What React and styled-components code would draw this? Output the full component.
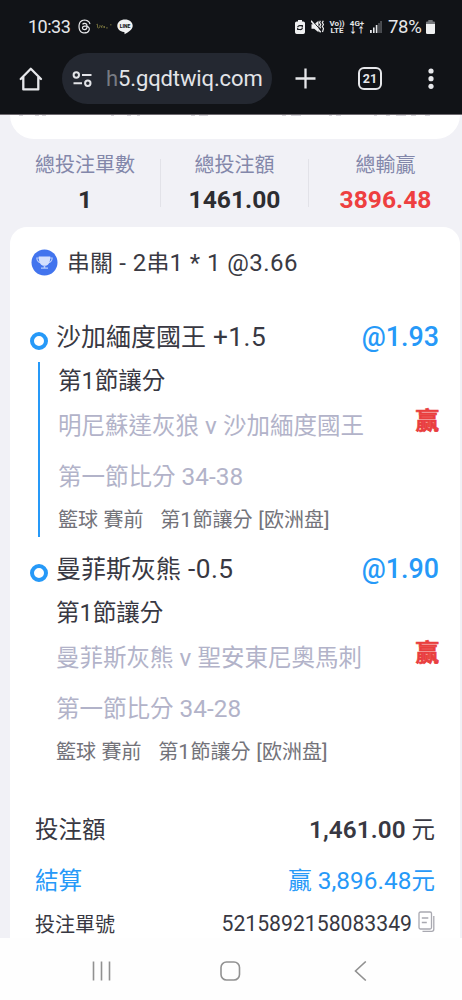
import React from 'react'
import styled, { createGlobalStyle } from 'styled-components'
import { FaThreads } from 'react-icons/fa6'

const GlobalStyle = createGlobalStyle`
    *, *::before, *::after {
        box-sizing: border-box;
    }

    body {
        margin: 0;
        font-family: Roboto, 'Noto Sans CJK TC', sans-serif;
        background: #fefefe;
    }

    svg {
        display: block;
        flex: none;
    }
`

const Phone = styled.div`
    width: 462px;
    height: 1000px;

    display: flex;
    flex-direction: column;
    overflow: hidden;
`

const StatusBar = styled.div`
    height: 53px;
    padding: 0 27px 0 28px;

    display: flex;
    align-items: center;
    justify-content: space-between;

    color: #e6e7ea;
    background: #111317;
`

const StatusGroup = styled.div`
    display: flex;
    align-items: center;
    gap: ${props => props.$gap}px;
`

const Clock = styled.span`
    width: 44px;
    font-size: 18px;
    letter-spacing: -0.5px;
    white-space: nowrap;
`

const Percent = styled.span`
    width: 38px;
    font-size: 18.5px;
    letter-spacing: -0.3px;
`

const TinyLabel = styled.span`
    width: 14px;
    font-size: 8px;
    line-height: 7px;
    font-weight: 700;
    white-space: nowrap;

    display: flex;
    flex-direction: column;
    align-items: center;
`

const BrowserBar = styled.div`
    height: 62px;
    padding: 0 24px 10px 19px;

    display: flex;
    align-items: center;

    background: #111317;
    border-bottom: 1px solid #6e6a70;
`

const AddressBox = styled.div`
    width: 210px;
    height: 51px;
    margin-left: 19px;
    padding-left: 10px;

    display: flex;
    align-items: center;

    border-radius: 26px;
    background: #242831;
`

const Address = styled.span`
    margin-left: 13px;
    font-size: 22px;
    letter-spacing: -0.12px;
    white-space: nowrap;
    color: #e3e4e8;

    .faded {
        color: #777b83;
    }
`

const BrowserActions = styled.div`
    flex: 1;
    margin-left: 23px;

    display: flex;
    align-items: center;
    justify-content: space-between;
`

const TabCount = styled.div`
    width: 24px;
    height: 23px;
    margin-left: 17px;
    margin-right: 17px;

    display: flex;
    align-items: center;
    justify-content: center;

    font-size: 12.5px;
    font-weight: 700;
    color: #e6e7ea;
    border: 2px solid #e6e7ea;
    border-radius: 6px;
`

const Page = styled.main`
    height: 823px;
    padding: 0 2px 0 10px;
    overflow: hidden;
    background: #f1f1f6;
`

const FilterCard = styled.div`
    height: 24px;
    background: #fff;
    border-radius: 0 0 28px 28px;
    overflow: hidden;
`

const Totals = styled.section`
    height: 88px;
    padding-top: 11px;
    display: flex;
`

const Total = styled.div`
    width: ${props => props.$width}px;
    flex: none;

    display: flex;
    flex-direction: column;
    align-items: center;

    span {
        height: 30px;
        line-height: 30px;
        font-size: 20px;
        color: #8387aa;
    }

    strong {
        height: 38px;
        line-height: 39px;
        font-size: 24.6px;
        color: ${props => props.$loss ? '#ee3f40' : '#2d2d31'};
    }
`

const Divider = styled.i`
    width: 1px;
    height: 48px;
    margin-top: 9px;
    flex: none;
    background: #e2e2e8;
`

const BetCard = styled.section`
    height: 740px;
    padding: 0 21px 0 20px;
    background: #fff;
    border-radius: 17px;
`

const CardTitle = styled.h1`
    height: 71px;
    margin: 0 0 16px 1px;

    display: flex;
    align-items: center;
    gap: 9px;

    font-size: 22.9px;
    font-weight: 400;
    white-space: pre;
    color: #3a3a43;

    > span {
        margin-top: -3px;
    }
`

const LegBox = styled.article`
    display: flex;
    margin-bottom: ${props => props.$last ? 36 : 10}px;
`

const Rail = styled.div`
    width: 18px;
    padding-top: 18px;

    display: flex;
    flex-direction: column;
    align-items: center;

    &::before {
        content: '';
        width: 18px;
        height: 18px;
        flex: none;
        border: 4px solid #2699f8;
        border-radius: 50%;
    }

    &::after {
        content: '';
        width: 2px;
        height: 175px;
        margin-top: 12px;
        margin-bottom: -1px;
        background: ${props => props.$line ? '#2699f8' : 'transparent'};
    }
`

const LegBody = styled.div`
    flex: 1;
    padding-left: ${props => props.$indent}px;
`

const Line = styled.div`
    height: ${props => props.$height}px;
    padding-bottom: 2px;

    display: flex;
    align-items: center;
    justify-content: space-between;

    font-size: ${props => props.$size || 23.5}px;
    color: ${props => props.$color || '#383842'};
    white-space: pre;
`

const Selection = styled(Line)`
    margin-left: ${props => -props.$shift}px;
    padding-bottom: 4px;
    font-size: 25px;
`

// latin runs sit a touch larger than the han characters
const Latin = styled.span`
    font-size: ${props => props.$tight ? 1.035 : 1.05}em;
    letter-spacing: ${props => props.$tight ? 0.003 : 0.018}em;
`

const Odds = styled.span`
    margin-top: 3px;
    font-size: 26.8px;
    font-weight: 500;
    color: #2699f8;
`

const Win = styled.b`
    margin-top: -11px;
    font-family: 'Noto Sans CJK SC', sans-serif;
    font-size: 23.5px;
    color: #e93e3e;
    -webkit-text-stroke: 0.7px #e93e3e;
`

const Summary = styled.div`
    padding: 0 4px 0 5px;
`

const BoldAmount = styled.b`
    font-size: 24.3px;
    font-weight: 600;
    letter-spacing: 0.1px;
`

const TicketId = styled.span`
    display: flex;
    align-items: center;
    gap: 6px;
    font-size: 21.2px;

    svg {
        margin-top: -3px;
    }
`

const NavBar = styled.nav`
    height: 62px;
    padding: 3px 95px 0 91px;

    display: flex;
    align-items: center;
    justify-content: space-between;

    background: #fefefe;

    .home {
        margin-right: 5px;
    }
`

const legs = [
    {
        name: '沙加緬度國王 +1.5',
        odds: '@1.93',
        market: '第1節讓分',
        teams: '明尼蘇達灰狼 v 沙加緬度國王',
        score: '第一節比分 34-38',
    },
    {
        name: '曼菲斯灰熊 -0.5',
        odds: '@1.90',
        market: '第1節讓分',
        teams: '曼菲斯灰熊 v 聖安東尼奧馬刺',
        score: '第一節比分 34-28',
    },
]

const Mixed = ({ children, tight }) => (
    <span>
        {children.split(/([ -~]+)/).map((part, i) => i % 2 ? <Latin key={i} $tight={tight}>{part}</Latin> : part)}
    </span>
)

const LineBubble = () => (
    <svg width="16" height="16" viewBox="0 0 16 16">
        <path d="M8 0.5C3.6 .5 .3 3.2 .3 6.8c0 3.2 2.7 5.8 6.6 6.3.7.1.8.6.6 2.2 3.5-1.8 8.2-4.6 8.2-8.5C15.700 3.200 12.400.5 8 .5z" fill="#f1f2f3" />
        <text x="8" y="8.700" textAnchor="middle" fontSize="5" fontWeight="900" fill="#15171b">LINE</text>
    </svg>
)

const Scribble = () => (
    <svg width="16" height="8" viewBox="0 0 16 8" fill="none" stroke="#77733d" strokeWidth="0.9">
        <path d="M.5 1.500 1.500 1.200v3.300q1 1.200 2.500-.5V2M5.500 4.800V3q1.200-1 1.700.3v1.500M8.500 5V3M10 4.900h1.800M14 1.800h1.500" />
    </svg>
)

const BatterySaver = () => (
    <svg width="10" height="14" viewBox="0 0 10 14">
        <path d="M3 0h4v1.500h1.300Q10 1.500 10 3v9.300Q10 14 8.300 14H1.700Q0 14 0 12.300V3Q0 1.500 1.700 1.500H3z" fill="#eff0f1" />
        <path d="M2.500 7.300Q3.500 5.500 5 5.700h2.300V7.500M7.500 8Q6.700 9.800 5 9.500H2.700V8" fill="none" stroke="#17191d" strokeWidth="1.200" />
    </svg>
)

const MutedVibrate = () => (
    <svg width="13" height="13" viewBox="0 0 13 13">
        <path d="M.5 4.300h2.700L7.500.8v11.400L3.200 8.800H.5z" fill="#eff0f1" />
        <path d="m1.500.8 9.500 11" stroke="#111317" strokeWidth="1" />
        <path d="m0 .8 9.700 11.500" stroke="#eff0f1" strokeWidth="1.400" />
        <path d="m9.400.8-.9 2 1.200 1.700-1 2 1 1.700M12.300.8l-1 2 1.200 1.700-1.200 2 1.200 2-1 3.500" fill="none" stroke="#eff0f1" strokeWidth="1.200" />
    </svg>
)

const Signal = () => (
    <svg width="12" height="13" viewBox="0 0 12 13" fill="#e6e7ea">
        <path d="M0 10h1.800v3H0zM3 7.500h1.600V13H3zM5.800 5h1.600v8H5.800z" />
        <path d="M8.300 3h1.400v10H8.300zM10.300 1h1.500v12h-1.500z" fill="#5b5e63" />
    </svg>
)

const Battery = () => (
    <svg width="9" height="14" viewBox="0 0 9 14">
        <path d="M2.300 0h4.400v1.500H8q1 0 1 1V5H0V2.500q0-1 1-1h1.300z" fill="#75777b" />
        <path d="M0 4h9v8.700Q9 14 7.700 14H1.300Q0 14 0 12.700z" fill="#eff0f1" />
    </svg>
)

const Home = () => (
    <svg width="24" height="24" viewBox="0 0 24 24" fill="none" stroke="#e6e7ea" strokeWidth="2.300" strokeLinejoin="round" strokeLinecap="round">
        <path d="M1.700 12 11.800 1.800 22 12M4.300 10v12.400h15V10" />
    </svg>
)

const SiteSettings = () => (
    <svg width="21" height="16" viewBox="0 0 21 16" fill="none" stroke="#e3e4e8" strokeWidth="2">
        <circle cx="4.300" cy="4" r="2.700" />
        <path d="M10 4h9.500M1.500 12.300h8.500" />
        <circle cx="15.800" cy="12.300" r="2.700" />
    </svg>
)

const Trophy = () => (
    <svg width="27" height="27" viewBox="0 0 27 27">
        <circle cx="13.500" cy="13.500" r="13" fill="#4274ee" />
        <path d="M8 9H5.800q.2 4 4 4.800M19 9h2.200q-.2 4-4 4.800" fill="none" stroke="#b7cbfc" strokeWidth="1.100" />
        <path d="M7.700 7.500h11.600q0 8-4.300 9.300h-3Q7.700 15.500 7.700 7.500z" fill="#d3dffd" />
        <path d="M12.700 16.500h1.600V18.500h2.700v1.300H10v-1.300h2.700z" fill="#b7cbfc" />
    </svg>
)

const CopyIcon = () => (
    <svg width="17" height="22" viewBox="0 0 17 22" fill="none" stroke="#a9a9b1" strokeWidth="1.300">
        <rect x="1" y="1" width="12.500" height="17" rx="1.500" />
        <path d="M3.800 7h6.500M3.800 11.500h5M4.500 20.300h9.300q2 0 2-2V5" />
    </svg>
)

// parts of the filter labels left visible under the browser bar
const FilterEdge = () => (
    <svg width="450" height="1" viewBox="0 0 450 1" stroke="#d6d5da" strokeWidth="1">
        <path d="M9 .5h4M25 .5h4M32 .5h4M101 .5h3M117 .5h4M127 .5h3M181 .5h4M189 .5h9M272 .5h4M281 .5h10M319 .5h3M326 .5h5M364 .5h3M376 .5h4M386 .5h10M401 .5h5M415 .5h5" />
    </svg>
)

const Leg = ({ leg, indent, last }) => (
    <LegBox $last={last}>
        <Rail $line={!last} />
        <LegBody $indent={indent}>
            <Selection $height={46} $shift={indent - 8}>
                <Mixed>{leg.name}</Mixed>
                <Odds>{leg.odds}</Odds>
            </Selection>
            <Line $height={40}>{leg.market}</Line>
            <Line $height={50} $color="#b2b3c9">
                <Mixed tight>{leg.teams}</Mixed>
                <Win>赢</Win>
            </Line>
            <Line $height={52} $color="#b2b3c9"><Mixed tight>{leg.score}</Mixed></Line>
            <Line $height={34} $size={20} $color="#73737a"><Mixed>{'籃球 賽前   第1節讓分 [欧洲盘]'}</Mixed></Line>
        </LegBody>
    </LegBox>
)

const App = () => {
    return (
        <Phone>
            <GlobalStyle />
            <StatusBar>
                <StatusGroup $gap={4.7}>
                    <Clock>10:33</Clock>
                    <FaThreads size={15} />
                    <Scribble />
                    <LineBubble />
                </StatusGroup>
                <StatusGroup $gap={6}>
                    <BatterySaver />
                    <MutedVibrate />
                    <TinyLabel><span>Vo))</span><span>LTE</span></TinyLabel>
                    <TinyLabel><span>4G+</span><span>↓↑</span></TinyLabel>
                    <Signal />
                    <StatusGroup $gap={0}>
                        <Percent>78%</Percent>
                        <Battery />
                    </StatusGroup>
                </StatusGroup>
            </StatusBar>

            <BrowserBar>
                <Home />
                <AddressBox>
                    <SiteSettings />
                    <Address><span className="faded">h</span>5.gqdtwiq.com</Address>
                </AddressBox>
                <BrowserActions>
                    <svg width="21" height="21" viewBox="0 0 21 21" stroke="#e6e7ea" strokeWidth="2.300">
                        <path d="M10.500 .5v20M.5 10.500h20" />
                    </svg>
                    <TabCount>21</TabCount>
                    <svg width="14" height="22" viewBox="0 0 14 22" fill="#e6e7ea">
                        <circle cx="7" cy="3" r="2.600" />
                        <circle cx="7" cy="10.700" r="2.600" />
                        <circle cx="7" cy="18.300" r="2.600" />
                    </svg>
                </BrowserActions>
            </BrowserBar>

            <Page>
                <FilterCard><FilterEdge /></FilterCard>

                <Totals>
                    <Total $width={150}><span>總投注單數</span><strong>1</strong></Total>
                    <Divider />
                    <Total $width={147}><span>總投注額</span><strong>1461.00</strong></Total>
                    <Divider />
                    <Total $width={153} $loss><span>總輸贏</span><strong>3896.48</strong></Total>
                </Totals>

                <BetCard>
                    <CardTitle><Trophy /><Mixed>串關 - 2串1 * 1 @3.66</Mixed></CardTitle>
                    <Leg leg={legs[0]} indent={10} />
                    <Leg leg={legs[1]} indent={8} last />
                    <Summary>
                        <Line $height={50}>
                            投注額
                            <span><BoldAmount>1,461.00</BoldAmount> 元</span>
                        </Line>
                        <Line $height={51} $color="#2699f8">
                            結算
                            <Mixed tight>贏 3,896.48元</Mixed>
                        </Line>
                        <Line $height={38} $size={20}>
                            投注單號
                            <TicketId>5215892158083349<CopyIcon /></TicketId>
                        </Line>
                    </Summary>
                </BetCard>
            </Page>

            <NavBar>
                <svg width="21" height="20" viewBox="0 0 21 20" stroke="#919191" strokeWidth="1.600">
                    <path d="M2.500 .5v19M10.500 .5v19M18.500 .5v19" />
                </svg>
                <svg className="home" width="21" height="20" viewBox="0 0 21 20" fill="none" stroke="#919191" strokeWidth="1.600">
                    <rect x="1" y="1" width="18.500" height="18" rx="5.500" />
                </svg>
                <svg width="13" height="20" viewBox="0 0 13 20" fill="none" stroke="#919191" strokeWidth="1.600">
                    <path d="M11.800 .5 1.500 10l10.300 9.500" />
                </svg>
            </NavBar>
        </Phone>
    )
}

export default App
